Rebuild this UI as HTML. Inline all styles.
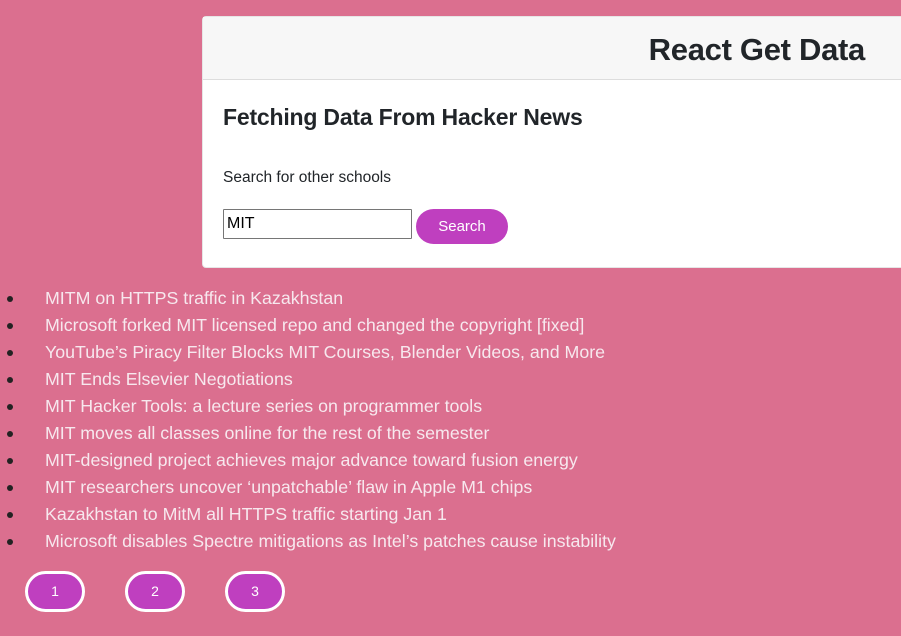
<!DOCTYPE html>
<html><head><style>
body{margin:0;width:901px;height:636px;background:#db6f8f;font-family:"Liberation Sans",sans-serif;overflow:hidden;position:relative}
.card{position:absolute;left:202px;top:16px;width:710px;height:252px;background:#fff;border:1px solid #e6e6e6;border-radius:4px;box-sizing:border-box}
.hd{height:63px;background:#f7f7f7;border-bottom:1px solid #ddd;box-sizing:border-box;position:relative}
.hd h1{position:absolute;right:46px;top:15px;margin:0;font-size:31px;font-weight:700;color:#212529;letter-spacing:-0.3px}
h2{position:absolute;left:20px;top:87px;margin:0;font-size:23px;font-weight:700;color:#212529;letter-spacing:-0.2px}
.lbl{position:absolute;left:20px;top:152px;font-size:15.5px;color:#212529}
input{position:absolute;left:20px;top:192px;width:189px;height:30px;box-sizing:border-box;border:1px solid #767676;font-size:16px;padding:0 3px;font-family:inherit;border-radius:1px}
.sb{position:absolute;left:213px;top:192px;width:92px;height:35px;border-radius:18px;background:#bf3fbf;color:#fff;font-size:15px;text-align:center;line-height:36px}
ul{position:absolute;left:0;top:285px;margin:0;padding:0 0 0 45px;list-style:none}
li{position:relative;height:27px;line-height:27px;font-size:17.8px;color:#f7e8ee;white-space:nowrap}
li:before{content:"";position:absolute;left:-38px;top:11px;width:6px;height:6px;border-radius:50%;background:#222}
.p{position:absolute;top:571px;width:60px;height:41px;box-sizing:border-box;border:3.5px solid #fff;border-radius:21px;background:#bf3fbf;color:#fff;font-size:14px;text-align:center;line-height:34px}
</style></head><body>
<div class="card"><div class="hd"><h1>React Get Data</h1></div>
<h2>Fetching Data From Hacker News</h2>
<div class="lbl">Search for other schools</div>
<input value="MIT"><div class="sb">Search</div></div>
<ul>
<li>MITM on HTTPS traffic in Kazakhstan</li>
<li>Microsoft forked MIT licensed repo and changed the copyright [fixed]</li>
<li>YouTube’s Piracy Filter Blocks MIT Courses, Blender Videos, and More</li>
<li>MIT Ends Elsevier Negotiations</li>
<li>MIT Hacker Tools: a lecture series on programmer tools</li>
<li>MIT moves all classes online for the rest of the semester</li>
<li>MIT-designed project achieves major advance toward fusion energy</li>
<li>MIT researchers uncover ‘unpatchable’ flaw in Apple M1 chips</li>
<li>Kazakhstan to MitM all HTTPS traffic starting Jan 1</li>
<li>Microsoft disables Spectre mitigations as Intel’s patches cause instability</li>
</ul>
<div class="p" style="left:25px">1</div>
<div class="p" style="left:125px">2</div>
<div class="p" style="left:225px">3</div>
</body></html>
